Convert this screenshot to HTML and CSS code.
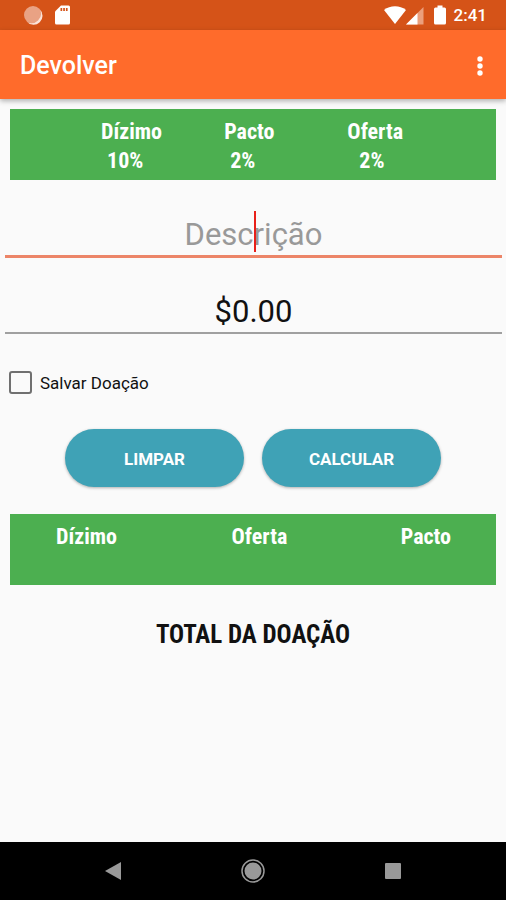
FILE: index.html
```html
<!DOCTYPE html>
<html lang="pt-BR">
<head>
  <meta charset="UTF-8">
  <meta name="viewport" content="width=device-width, initial-scale=1">
  <title>Devolver</title>
  <link rel="stylesheet" href="styles.css">
</head>
<body>
  <!-- Barra de status -->
  <div class="status">
    <svg class="statusIcon" width="20" height="20" viewBox="0 0 20 20">
      <circle cx="10" cy="10" r="9" fill="#e9a284"/>
      <path d="M17 4.500a9 9 0 0 1-13 12.500a9.500 9.500 0 0 0 13-12.500z" fill="#fbe4da"/>
    </svg>
    <svg class="statusIcon" width="16" height="20" viewBox="0 0 16 20">
      <path d="M6 0.500h7.500a1.500 1.500 0 0 1 1.500 1.500v16a1.500 1.500 0 0 1-1.500 1.500h-12a1.500 1.500 0 0 1-1.500-1.500v-11.500z" fill="#fff"/>
      <path d="M5.500 3h1.700v3h-1.700zM8.200 3h1.700v3h-1.700zM10.900 3h1.700v3h-1.700z" fill="#d55318"/>
    </svg>
    <span class="espaco"></span>
    <svg width="22" height="20" viewBox="0 0 22 20">
      <path d="M11 19L0 5a18 18 0 0 1 22 0z" fill="#fff"/>
    </svg>
    <svg width="18" height="20" viewBox="0 0 18 20">
      <path d="M17.500 2v17.500h-17.500z" fill="#eb9f7c"/>
      <path d="M11.500 8v11.500h-11.500z" fill="#fff"/>
    </svg>
    <svg class="bateria" width="12" height="20" viewBox="0 0 12 20">
      <path d="M3.500 0.500h5v2h2a1.500 1.500 0 0 1 1.500 1.500v14a1.500 1.500 0 0 1-1.500 1.500h-9a1.500 1.500 0 0 1-1.500-1.500v-14a1.500 1.500 0 0 1 1.500-1.500h2z" fill="#fff"/>
    </svg>
    <span class="hora">2:41</span>
  </div>

  <header class="appbar">
    <h1>Devolver</h1>
    <button class="menu" type="button" aria-label="Mais opções">
      <svg width="6" height="20" viewBox="0 0 6 20" fill="#fff">
        <circle cx="3" cy="3" r="2.700"/>
        <circle cx="3" cy="10" r="2.700"/>
        <circle cx="3" cy="17" r="2.700"/>
      </svg>
    </button>
  </header>

  <main>
    <!-- Percentuais -->
    <div class="painel percentuais">
      <table>
        <thead>
          <tr><th>Dízimo</th><th>Pacto</th><th>Oferta</th></tr>
        </thead>
        <tbody>
          <tr><td>10%</td><td>2%</td><td class="recuo">2%</td></tr>
        </tbody>
      </table>
    </div>

    <form>
      <div class="campo">
        <input class="descricao" type="text" placeholder="Descrição" aria-label="Descrição">
        <span class="cursor"></span>
      </div>
      <div class="campo">
        <input class="valor" type="text" value="$0.00" aria-label="Valor">
      </div>

      <div class="salvar">
        <input type="checkbox" id="salvar">
        <label for="salvar">Salvar Doação</label>
      </div>

      <div class="botoes">
        <button type="reset">LIMPAR</button>
        <button type="button">CALCULAR</button>
      </div>
    </form>

    <!-- Resultado -->
    <div class="painel resultado">
      <table>
        <thead>
          <tr><th>Dízimo</th><th>Oferta</th><th>Pacto</th></tr>
        </thead>
        <tbody>
          <tr><td></td><td></td><td></td></tr>
        </tbody>
      </table>
    </div>

    <h2>TOTAL DA DOAÇÃO</h2>
  </main>

  <nav>
    <button type="button" aria-label="Voltar">
      <svg width="24" height="24" viewBox="0 0 24 24"><path d="M4 12L20 3v18z" fill="#999"/></svg>
    </button>
    <button type="button" aria-label="Início">
      <svg width="24" height="24" viewBox="0 0 24 24">
        <circle cx="12" cy="12" r="11" fill="none" stroke="#999" stroke-width="1.500"/>
        <circle cx="12" cy="12" r="8.500" fill="#999"/>
      </svg>
    </button>
    <button type="button" aria-label="Recentes">
      <svg width="24" height="24" viewBox="0 0 24 24"><rect x="4" y="4" width="16" height="16" rx="1" fill="#999"/></svg>
    </button>
  </nav>
</body>
</html>
```
FILE: styles.css
```css
* {
  box-sizing: border-box;
}
body {
  margin: 0;
  min-height: 100vh;
  display: flex;
  flex-direction: column;
  background-color: #fafafa;
  color: #111;
  font-family: Roboto, sans-serif;
}
button {
  border: none;
  padding: 0;
  background: none;
  font-family: inherit;
  cursor: pointer;
}
svg {
  display: block;
}

/* Barra de status */
.status {
  display: flex;
  align-items: center;
  height: 30px;
  padding: 0 19px 0 23px;
  background-color: #d55318;
  color: #fff;
}
.statusIcon {
  margin-right: 12px;
}
.espaco {
  flex: 1;
}
.bateria {
  margin: 0 8px 0 10px;
}
.hora {
  font-size: 17px;
  font-weight: 500;
}

.appbar {
  display: flex;
  align-items: center;
  justify-content: space-between;
  height: 69px;
  padding: 2px 15px 0 20px;
  background-color: #ff6b2b;
  box-shadow: 0 2px 5px rgba(0, 0, 0, 0.3);
}
h1 {
  margin: 0;
  color: #fff;
  font-size: 25px;
  font-weight: 500;
}
.menu {
  padding: 8px;
}

main {
  flex: 1;
  padding-top: 10px;
}

/* Paineis verdes */
.painel {
  height: 71px;
  margin: 0 10px;
  padding-top: 8px;
  background-color: #4caf50;
  color: #fff;
}
.painel table,
h2 {
  font-family: "Roboto Condensed", "Liberation Sans Narrow", Roboto, sans-serif;
  font-weight: 700;
}
.painel table {
  width: 100%;
  border-collapse: collapse;
  table-layout: fixed;
  font-size: 22px;
  line-height: 29px;
}
th,
td {
  padding: 0;
  text-align: left;
}
.percentuais {
  padding-left: 18%;
  padding-right: 14%;
}
.percentuais th {
  width: 38%;
}
.percentuais th:last-child {
  width: 24%;
}
.percentuais td {
  padding-left: 6px;
}
.percentuais .recuo {
  padding-left: 12px;
}
.resultado {
  padding-left: 46px;
  padding-right: 45px;
}
.resultado th:nth-child(1) {
  width: 36%;
}
.resultado th:nth-child(2) {
  width: 31%;
  text-align: center;
}
.resultado th:nth-child(3) {
  text-align: right;
}

/* Campos de texto */
.campo {
  position: relative;
  margin: 0 4px 0 5px;
}
.campo input {
  display: block;
  width: 100%;
  border: none;
  outline: none;
  background: none;
  color: #111;
  font-family: inherit;
  font-size: 31px;
  text-align: center;
}
.campo .descricao {
  height: 78px;
  padding: 34px 0 0;
  border-bottom: 3px solid #ec8568;
}
.campo .valor {
  height: 76px;
  padding: 32px 0 0;
  border-bottom: 2px solid #a0a0a0;
}
.descricao::placeholder {
  color: #999;
  opacity: 1;
}
.cursor {
  position: absolute;
  left: 50%;
  bottom: 6px;
  width: 2px;
  height: 41px;
  background-color: #e8201a;
}

.salvar {
  display: flex;
  align-items: center;
  gap: 8px;
  margin: 37px 9px 0;
}
.salvar input {
  appearance: none;
  width: 23px;
  height: 23px;
  margin: 0;
  border: 2px solid #707070;
  border-radius: 3px;
}
.salvar input:checked {
  background-color: #ff6b2b;
}
.salvar label {
  font-size: 17px;
}

.botoes {
  display: flex;
  justify-content: center;
  gap: 18px;
  margin: 35px 0 27px;
}
.botoes button {
  width: 179px;
  height: 58px;
  padding-top: 1px;
  border-radius: 29px;
  background-color: #3fa2b6;
  box-shadow: 0 1px 3px rgba(0, 0, 0, 0.3);
  color: #fff;
  font-size: 17px;
  font-weight: 700;
}

h2 {
  margin: 35px 0 0;
  font-size: 25px;
  line-height: 30px;
  text-align: center;
}

/* Barra de navegação */
nav {
  display: grid;
  grid-template-columns: repeat(3, 1fr);
  justify-items: center;
  align-items: center;
  height: 58px;
  padding: 0 43px;
  background-color: #000;
}
```
